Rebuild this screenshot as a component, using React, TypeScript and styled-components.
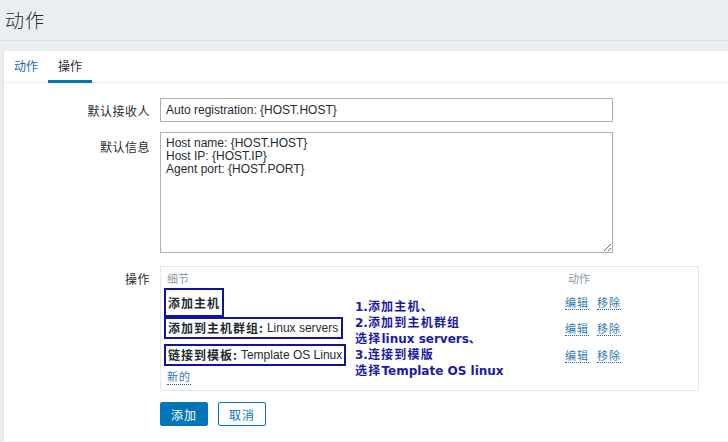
import React from 'react';
import styled, { createGlobalStyle } from 'styled-components';

const GlobalStyle = createGlobalStyle`
  html, body {
    margin: 0;
    padding: 0;
    background: #ebeef0;
    font-family: "Liberation Sans", Arial, "Noto Sans CJK SC", sans-serif;
    font-size: 12px;
    color: #1f2c33;
  }
`;

const Page = styled.div`
  width: 728px;
  height: 442px;
  overflow: hidden;
  background: #ebeef0;
`;

const Header = styled.div`
  height: 40px;
  border-bottom: 1px solid #dfe4e7;
  display: flex;
  align-items: center;
  padding-left: 5px;
`;

const Title = styled.h1`
  margin: 0 0 2px;
  font-family: "Noto Sans CJK SC", sans-serif;
  font-weight: 300;
  font-size: 19px;
  letter-spacing: 1px;
  color: #1f2c33;
`;

const Main = styled.div`
  padding: 10px 0 0 3px;
`;

const Panel = styled.div`
  background: #ffffff;
  border-left: 1px solid #dfe4e7;
  height: 390px;
`;

const TabBar = styled.div`
  display: flex;
  height: 31px;
  border-bottom: 1px solid #ebeef0;
`;

const Tab = styled.div<{ $active?: boolean }>`
  display: flex;
  align-items: center;
  padding: 0 10px;
  font-family: "Noto Sans CJK SC", sans-serif;
  font-size: 12px;
  color: ${(p) => (p.$active ? '#1f2c33' : '#1f65a6')};
  border-bottom: 3px solid ${(p) => (p.$active ? '#0275b8' : 'transparent')};
  margin-bottom: -1px;
`;

const Form = styled.div`
  display: grid;
  grid-template-columns: 146px 453px;
  column-gap: 10px;
  padding-top: 15px;
`;

const Label = styled.div<{ $top?: number }>`
  text-align: right;
  font-family: "Noto Sans CJK SC", sans-serif;
  font-size: 12px;
  letter-spacing: 0.5px;
  color: #1f2c33;
  padding-top: ${(p) => p.$top ?? 4}px;
`;

const Field = styled.div<{ $gap?: number }>`
  margin-bottom: ${(p) => p.$gap ?? 10}px;
`;

const TextInput = styled.input`
  box-sizing: border-box;
  width: 453px;
  height: 24px;
  border: 1px solid #b0b0b0;
  padding: 0 5px;
  font-family: "Liberation Sans", Arial, sans-serif;
  font-size: 12px;
  color: #1f2c33;
  outline: none;
`;

const TextArea = styled.textarea`
  box-sizing: border-box;
  display: block;
  width: 453px;
  height: 121px;
  border: 1px solid #b0b0b0;
  padding: 4px 5px;
  font-family: "Liberation Sans", Arial, sans-serif;
  font-size: 12px;
  line-height: 13px;
  color: #1f2c33;
  resize: both;
  outline: none;
`;

const OpsBox = styled.div`
  position: relative;
  box-sizing: border-box;
  width: 539px;
  height: 125px;
  border: 1px solid #e6e9eb;
  padding: 0 0 0 3px;
`;

const OpsRow = styled.div<{ $h: number }>`
  display: grid;
  grid-template-columns: 401px auto;
  align-items: center;
  height: ${(p) => p.$h}px;
`;

const HeadCell = styled.div`
  font-family: "Noto Sans CJK SC", sans-serif;
  font-size: 11px;
  color: #8a979e;
  padding-left: 3px;
`;

const Detail = styled.span<{ $pad: string }>`
  justify-self: start;
  display: inline-flex;
  align-items: center;
  border: 2px solid #12129e;
  padding: ${(p) => p.$pad};
  font-size: 12px;
  line-height: 16px;
  white-space: nowrap;
`;

const Strong = styled.b`
  font-family: "Noto Sans CJK SC", sans-serif;
  font-weight: 700;
  font-size: 12px;
  letter-spacing: 1px;
  color: #1f2c33;
`;

const Value = styled.span`
  font-family: "Liberation Sans", Arial, sans-serif;
  font-size: 12px;
  color: #1f2c33;
  margin-left: 3px;
`;

const Links = styled.div`
  display: flex;
  gap: 8px;
`;

const Link = styled.a<{ $indent?: boolean }>`
  font-family: "Noto Sans CJK SC", sans-serif;
  font-size: 11px;
  letter-spacing: 1px;
  color: #2f7ab8;
  text-decoration: none;
  border-bottom: 1px dotted #1f65a6;
  line-height: 14px;
  margin-left: ${(p) => (p.$indent ? '3px' : '0')};
  cursor: pointer;
`;

const Note = styled.div`
  position: absolute;
  left: 194px;
  top: 31px;
  font-family: "DejaVu Sans", "Noto Sans CJK SC", sans-serif;
  font-weight: 700;
  font-size: 12px;
  color: #1a1aa8;
  white-space: nowrap;
`;

const NoteLine = styled.div`
  height: 16px;
  line-height: 15px;
  overflow: visible;
`;

const NoteCjk = styled.span`
  font-family: "Noto Sans CJK SC", sans-serif;
  font-size: 12px;
  line-height: 15px;
  letter-spacing: 1.2px;
`;

const Buttons = styled.div`
  display: flex;
  gap: 10px;
  padding-top: 11px;
`;

const Button = styled.button<{ $primary?: boolean }>`
  box-sizing: border-box;
  width: 48px;
  height: 24px;
  border-radius: 2px;
  border: 1px solid #0275b8;
  background: ${(p) => (p.$primary ? '#0275b8' : '#ffffff')};
  color: ${(p) => (p.$primary ? '#ffffff' : '#0275b8')};
  font-family: "Noto Sans CJK SC", sans-serif;
  font-size: 12px;
  letter-spacing: 1px;
  padding: 0;
  cursor: pointer;
`;

const operations = [
  { h: 25, pad: '5px 2px 4px 2px', name: '添加主机', value: '' },
  { h: 30, pad: '1px 3px 1px 2px', name: '添加到主机群组:', value: 'Linux servers' },
  { h: 24, pad: '1px 2px 1px 2px', name: '链接到模板:', value: 'Template OS Linux' },
];

const App: React.FC = () => {
  return (
    <Page>
      <GlobalStyle />
      <Header>
        <Title>动作</Title>
      </Header>
      <Main>
        <Panel>
          <TabBar>
            <Tab>动作</Tab>
            <Tab $active>操作</Tab>
          </TabBar>
          <Form>
            <Label>默认接收人</Label>
            <Field>
              <TextInput defaultValue="Auto registration: {HOST.HOST}" />
            </Field>

            <Label $top={6}>默认信息</Label>
            <Field $gap={13}>
              <TextArea
                defaultValue={'Host name: {HOST.HOST}\nHost IP: {HOST.IP}\nAgent port: {HOST.PORT}'}
              />
            </Field>

            <Label $top={4}>操作</Label>
            <Field $gap={0}>
              <OpsBox>
                <OpsRow $h={21}>
                  <HeadCell>细节</HeadCell>
                  <HeadCell>动作</HeadCell>
                </OpsRow>
                {operations.map((op) => (
                  <OpsRow key={op.name} $h={op.h}>
                    <Detail $pad={op.pad}>
                      <Strong>{op.name}</Strong>
                      {op.value && <Value>{op.value}</Value>}
                    </Detail>
                    <Links>
                      <Link>编辑</Link>
                      <Link>移除</Link>
                    </Links>
                  </OpsRow>
                ))}
                <OpsRow $h={18}>
                  <div>
                    <Link $indent>新的</Link>
                  </div>
                </OpsRow>
                <Note>
                  <NoteLine>1.<NoteCjk>添加主机、</NoteCjk></NoteLine>
                  <NoteLine>2.<NoteCjk>添加到主机群组</NoteCjk></NoteLine>
                  <NoteLine><NoteCjk>选择</NoteCjk>linux servers<NoteCjk>、</NoteCjk></NoteLine>
                  <NoteLine>3.<NoteCjk>连接到模版</NoteCjk></NoteLine>
                  <NoteLine><NoteCjk>选择</NoteCjk>Template OS linux</NoteLine>
                </Note>
              </OpsBox>
              <Buttons>
                <Button $primary>添加</Button>
                <Button>取消</Button>
              </Buttons>
            </Field>
          </Form>
        </Panel>
      </Main>
    </Page>
  );
};

export default App;
